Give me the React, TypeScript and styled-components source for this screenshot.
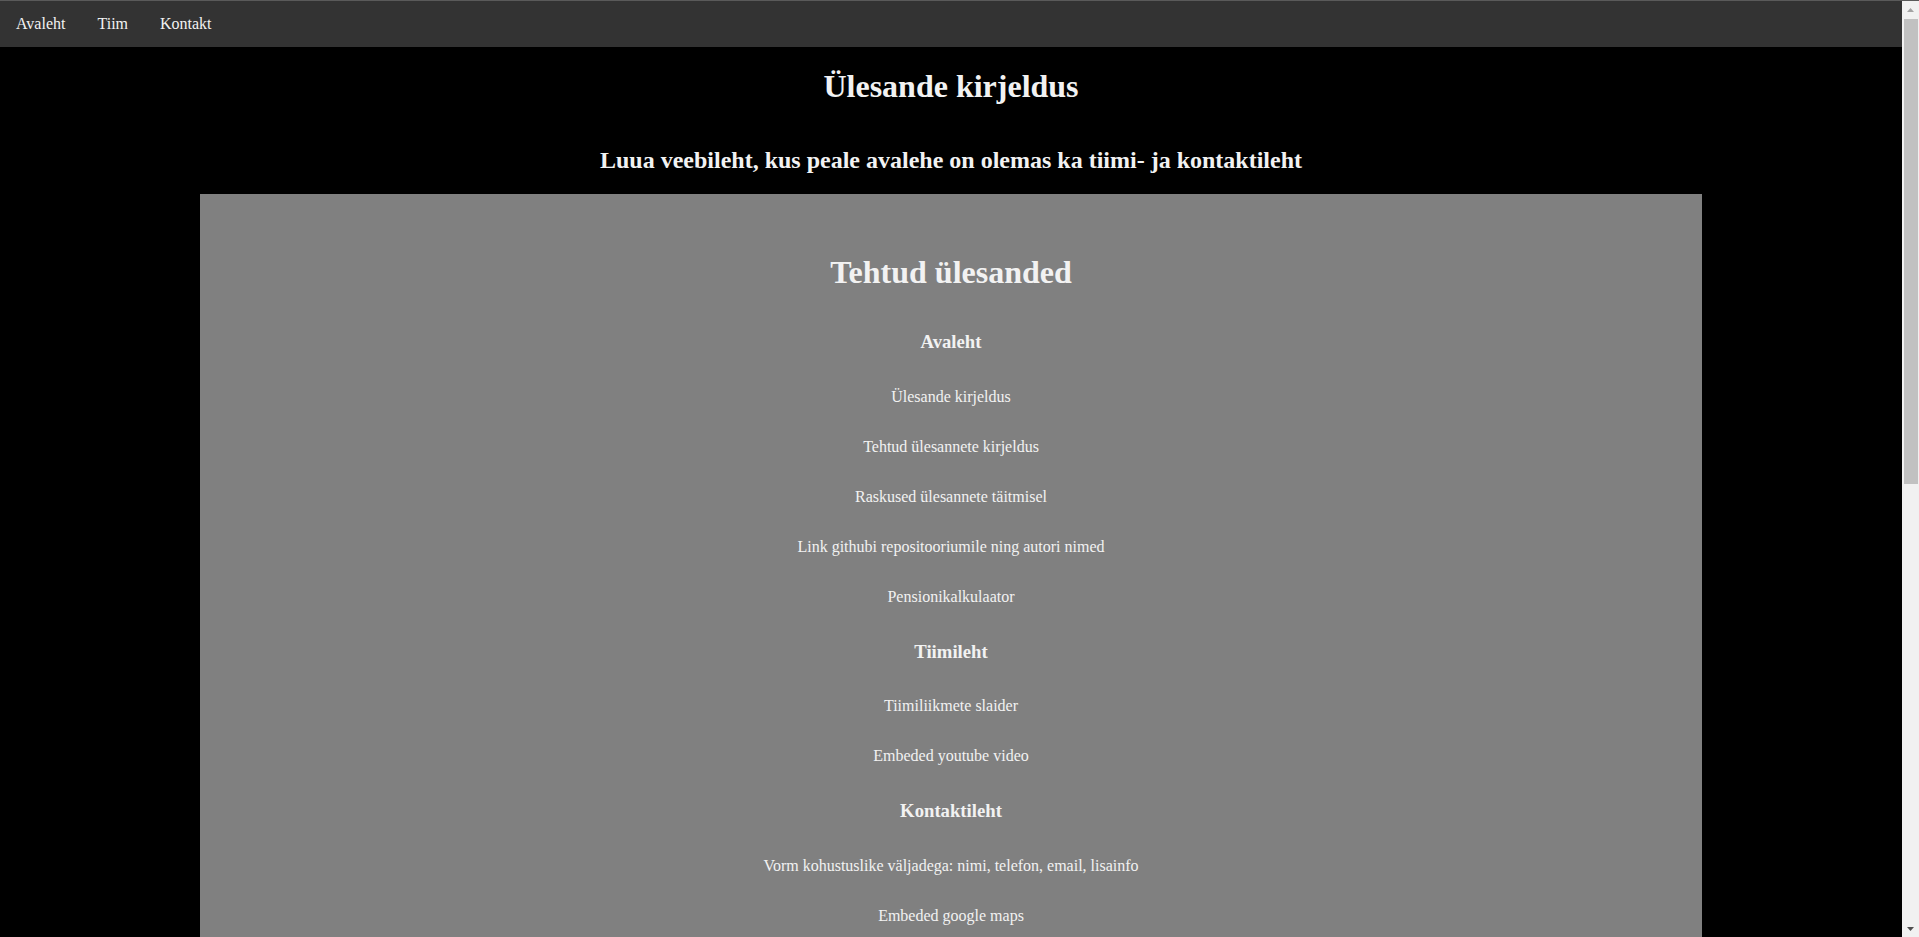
import styled, { createGlobalStyle } from 'styled-components';

const GlobalStyle = createGlobalStyle`
  body {
    margin: 0;
    background: #000;
    color: #f2f2f2;
    font-family: 'Liberation Serif', 'Times New Roman', serif;
  }
`;

const Page = styled.div`
  margin-right: 17px;
`;

const TopNav = styled.nav`
  display: flex;
  background: #333;
  border-top: 1px solid #5a5a5a;
`;

const NavLink = styled.a`
  padding: 14px 16px;
  font-size: 16px;
  color: #f2f2f2;
  text-decoration: none;
`;

const Header = styled.header`
  display: flex;
  flex-direction: column;
  align-items: center;
`;

const Title = styled.h1`
  font-size: 32px;
  margin: 21.44px 0;
`;

const Subtitle = styled.h2`
  font-size: 24px;
  margin: 19.92px 0;
`;

const Panel = styled.section`
  display: flex;
  flex-direction: column;
  align-items: center;
  margin: 0 200px;
  padding: 39px 0 60px;
  background: #808080;
`;

const PanelTitle = styled.h2`
  font-size: 32px;
  margin: 21.44px 0;
`;

const SectionTitle = styled.h3`
  font-size: 18.72px;
  margin: 18.72px 0;
`;

const Task = styled.p`
  font-size: 16px;
  margin: 16px 0;
`;

// fake classic scrollbar, sits over the right edge of the window
const Scrollbar = styled.div`
  position: fixed;
  top: 0;
  right: 0;
  bottom: 0;
  width: 17px;
  display: flex;
  flex-direction: column;
  background: #f1f1f1;
  border-top: 1px solid #5a5a5a;
`;

const ScrollArrow = styled.div<{ $down?: boolean }>`
  height: 17px;
  display: flex;
  align-items: center;
  justify-content: center;
  color: ${(p) => (p.$down ? '#505050' : '#a3a3a3')};
  margin-top: ${(p) => (p.$down ? 'auto' : '0')};
`;

const Thumb = styled.div`
  margin: 1px 1px 0 2px;
  height: 465px;
  background: #c1c1c1;
`;

const sections = [
  {
    title: 'Avaleht',
    tasks: [
      'Ülesande kirjeldus',
      'Tehtud ülesannete kirjeldus',
      'Raskused ülesannete täitmisel',
      'Link githubi repositooriumile ning autori nimed',
      'Pensionikalkulaator',
    ],
  },
  {
    title: 'Tiimileht',
    tasks: ['Tiimiliikmete slaider', 'Embeded youtube video'],
  },
  {
    title: 'Kontaktileht',
    tasks: ['Vorm kohustuslike väljadega: nimi, telefon, email, lisainfo', 'Embeded google maps'],
  },
];

export default function App() {
  return (
    <>
      <GlobalStyle />
      <Page>
        <TopNav>
          <NavLink href="#">Avaleht</NavLink>
          <NavLink href="#">Tiim</NavLink>
          <NavLink href="#">Kontakt</NavLink>
        </TopNav>
        <Header>
          <Title>Ülesande kirjeldus</Title>
          <Subtitle>Luua veebileht, kus peale avalehe on olemas ka tiimi- ja kontaktileht</Subtitle>
        </Header>
        <Panel>
          <PanelTitle>Tehtud ülesanded</PanelTitle>
          {sections.map((s) => (
            <>
              <SectionTitle key={s.title}>{s.title}</SectionTitle>
              {s.tasks.map((t) => (
                <Task key={t}>{t}</Task>
              ))}
            </>
          ))}
        </Panel>
      </Page>
      <Scrollbar>
        <ScrollArrow>
          <svg width="7" height="4" viewBox="0 0 7 4">
            <path d="M3.5 0 L7 4 L0 4 Z" fill="currentColor" />
          </svg>
        </ScrollArrow>
        <Thumb />
        <ScrollArrow $down>
          <svg width="7" height="4" viewBox="0 0 7 4">
            <path d="M0 0 L7 0 L3.5 4 Z" fill="currentColor" />
          </svg>
        </ScrollArrow>
      </Scrollbar>
    </>
  );
}
